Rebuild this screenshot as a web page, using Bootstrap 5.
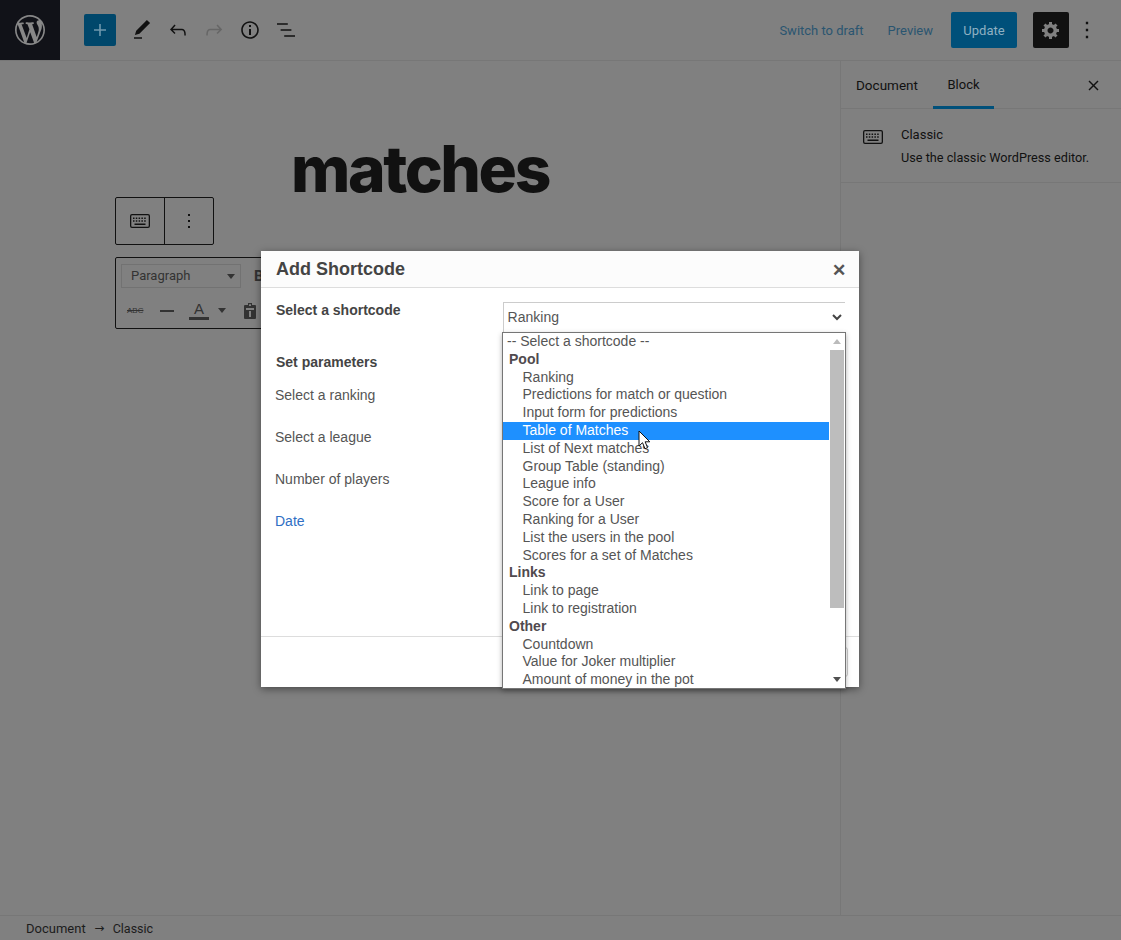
<!DOCTYPE html>
<html lang="en">
<head>
  <meta charset="UTF-8" />
  <meta name="viewport" content="width=device-width, initial-scale=1" />
  <title>Add Shortcode</title>
  <link href="https://cdn.jsdelivr.net/npm/bootstrap@5.3.0/dist/css/bootstrap.min.css" rel="stylesheet" />
  <style>
    html, body { height: 100%; margin: 0; overflow: hidden; }
    body { background: #808080; color: #111; font-family: Roboto, sans-serif; font-size: 13px; }
    .wp-shell { width: 1121px; height: 940px; position: relative; }
    svg { display: block; fill: currentColor; }

    /* top bar */
    .wp-top { height: 61px; border-bottom: 1px solid #777; }
    .wp-logo { width: 60px; height: 60px; background: #111218; color: #888; }
    .wp-tools { padding-left: 24px; gap: 4px; }
    .wp-add { width: 32px; height: 32px; background: #00476b; color: #6f98ad; border-radius: 2px; margin-right: 6px; }
    .wp-tool { width: 32px; height: 32px; color: #111; }
    .wp-tool-off { color: #666; }
    .wp-link { color: #2a5570; font-size: 13px; padding-top: 2px; }
    .wp-link-draft { margin-right: 24px; }
    .wp-link-preview { margin-right: 18px; }
    .wp-update { width: 66px; height: 36px; background: #00507a; color: #8fb0c2; border-radius: 2px; font-size: 13px; padding-top: 1px; }
    .wp-gear { width: 36px; height: 36px; background: #111; color: #808080; border-radius: 2px; }

    /* editor */
    .wp-main { height: 854px; }
    .wp-editor { width: 840px; }
    .wp-title { font-family: Inter, sans-serif; font-weight: 800; font-size: 64px; letter-spacing: -2.4px; line-height: 68px; margin: 74px 0 0; color: #111; }
    .wp-blockbar { width: 99px; height: 48px; margin: -6px 0 12px 115px; border: 1px solid #111; border-radius: 2px; }
    .wp-blockbar > div { width: 48px; }
    .wp-blockbar > div + div { border-left: 1px solid #111; width: 49px; }
    .wp-classic { width: 400px; height: 72px; margin-left: 115px; border: 1px solid #111; border-radius: 2px; color: #333; padding: 6px 5px; }
    .wp-format { width: 120px; height: 24px; border: 1px solid #727272; padding: 0 5px 0 9px; font-size: 13px; color: #333; }
    .wp-caret { width: 0; height: 0; border-left: 4px solid transparent; border-right: 4px solid transparent; border-top: 5px solid #333; }
    .wp-abc { font-size: 8px; font-family: "Liberation Sans", sans-serif; text-decoration: line-through; width: 24px; margin-left: 6px; }
    .wp-dash { width: 14px; height: 2px; background: #333; margin: 0 15px 0 9px; }
    .wp-color { font-family: "Liberation Sans", sans-serif; font-size: 15px; line-height: 16px; border-bottom: 3px solid #333; width: 20px; text-align: center; margin-right: 9px; }
    .wp-bold { font-size: 15px; margin-left: 13px; }

    /* sidebar */
    .wp-side { width: 281px; border-left: 1px solid #777; }
    .wp-tabs { height: 48px; border-bottom: 1px solid #777; padding-left: 15px; }
    .wp-tab-doc { width: 77px; line-height: 48px; font-size: 13.500px; }
    .wp-tab-on { width: 61px; line-height: 48px; height: 48px; text-align: center; border-bottom: 3px solid #00507a; }
    .wp-x { margin: 0 16px 0 auto; }
    .wp-card { height: 74px; border-bottom: 1px solid #777; padding: 17px 0 0 22px; gap: 18px; }
    .wp-card-name { line-height: 18px; margin-bottom: 4px; }
    .wp-card-desc { font-size: 12.700px; }

    /* footer */
    .wp-foot { height: 25px; border-top: 1px solid #777; padding-left: 26px; line-height: 25px; font-size: 13px; color: #1c1c1c; }
    .wp-foot-arrow { font-family: "DejaVu Sans", sans-serif; font-size: 12px; width: 27px; text-align: center; }
    .wp-foot-last { font-size: 12.500px; }

    /* shortcode modal */
    .sc-modal { position: absolute; left: 261px; top: 251px; width: 598px; height: 436px; background: #fff; box-shadow: 0 2px 8px rgba(0,0,0,.45); color: #555; font-family: "Liberation Sans", sans-serif; font-size: 14px; }
    .sc-head { height: 37px; background: #fcfcfc; border-bottom: 1px solid #ddd; padding: 2px 13px 0 15px; }
    .sc-head h1 { font-size: 18px; font-weight: 700; margin: 0; color: #444; }
    .sc-close { font-size: 17px; font-weight: 700; color: #555; line-height: 1; }
    .sc-body { height: 348px; padding: 14px 14px 0 14px; }
    .sc-left { width: 228px; }
    .sc-strong { font-weight: 700; color: #444; padding-left: 1px; line-height: 16px; }
    .sc-field { line-height: 16px; margin-bottom: 26px; }
    .sc-date { color: #2f6fc4; }
    .sc-select { width: 343px; height: 31px; border-top: 1px solid #ccc; border-left: 1px solid #ccc; padding: 0 3px 2px 4px; color: #555; }
    .sc-foot { border-top: 1px solid #ddd; height: 51px; padding-top: 10px; }
    .sc-btn { width: 60px; height: 30px; margin: 0 11px 0 auto; border: 1px solid #ccc; border-radius: 3px; }

    /* open select list */
    .sc-list { position: absolute; left: 241px; top: 81px; width: 344px; height: 357px; background: #fff; border: 1px solid #767676; box-shadow: 0 2px 5px rgba(0,0,0,.3); overflow: hidden; }
    .sc-list ul { margin: 0; padding: 0; list-style: none; width: 327px; }
    .sc-list li { height: 17.800px; line-height: 17.800px; padding-left: 19.500px; color: #555; white-space: nowrap; }
    .sc-list li.sc-none { padding-left: 4px; }
    .sc-list li.sc-group { padding-left: 6px; font-weight: 700; color: #504a4e; }
    .sc-list li.sc-on { background: #1e90ff; color: #fff; }
    .sc-scroll { position: absolute; right: 0; top: 0; width: 16px; height: 100%; background: #fff; }
    .sc-thumb { position: absolute; left: 1px; right: 1px; top: 17px; height: 258px; background: #bdbdbd; }
    .sc-arrow { position: absolute; left: 4px; width: 0; height: 0; border-left: 4px solid transparent; border-right: 4px solid transparent; }
    .sc-up { top: 6px; border-bottom: 5px solid #bbb; }
    .sc-down { bottom: 6px; border-top: 5px solid #505050; }
    .sc-cursor { position: absolute; left: 638px; top: 430px; }
  </style>
</head>
<body>
  <div class="wp-shell">
    <header class="wp-top d-flex align-items-center">
      <div class="wp-logo d-flex align-items-center justify-content-center">
        <svg width="30" height="30" viewBox="0 0 20 20"><path d="M20 10c0-5.51-4.49-10-10-10C4.48 0 0 4.49 0 10c0 5.52 4.48 10 10 10 5.51 0 10-4.48 10-10zM7.78 15.37L4.37 6.22c.55-.02 1.17-.08 1.17-.08.5-.06.44-1.13-.06-1.11 0 0-1.45.11-2.37.11-.18 0-.37 0-.58-.01C4.12 2.69 6.87 1.11 10 1.11c2.33 0 4.45.87 6.05 2.34-.68-.11-1.65.39-1.65 1.58 0 .74.45 1.36.9 2.1.35.61.55 1.36.55 2.46 0 1.49-1.4 5-1.4 5l-3.03-8.37c.54-.02.82-.17.82-.17.5-.05.44-1.25-.06-1.22 0 0-1.44.12-2.38.12-.87 0-2.33-.12-2.33-.12-.5-.03-.56 1.2-.06 1.22l.92.08 1.26 3.41zM17.41 10c.24-.64.74-1.87.43-4.25.7 1.29 1.05 2.71 1.05 4.25 0 3.29-1.73 6.24-4.4 7.78.97-2.59 1.94-5.2 2.92-7.78zM6.1 18.09C3.12 16.65 1.11 13.53 1.11 10c0-1.3.23-2.48.72-3.59C3.25 10.3 4.67 14.2 6.1 18.09zm4.03-6.63l2.58 6.98c-.86.29-1.76.45-2.71.45-.79 0-1.57-.11-2.29-.33.81-2.38 1.62-4.74 2.42-7.1z"/></svg>
      </div>
      <div class="wp-tools d-flex align-items-center">
        <div class="wp-add d-flex align-items-center justify-content-center">
          <svg width="24" height="24" viewBox="0 0 24 24"><path d="M18 11.2h-5.2V6h-1.6v5.2H6v1.6h5.2V18h1.6v-5.2H18z"/></svg>
        </div>
        <div class="wp-tool d-flex align-items-center justify-content-center">
          <svg width="24" height="24" viewBox="0 0 24 24"><path d="M20.1 5.1L16.9 2 6.2 12.7l-1.3 4.4 4.5-1.3L20.1 5.1zM4 20.8h8v-1.5H4v1.5z"/></svg>
        </div>
        <div class="wp-tool d-flex align-items-center justify-content-center">
          <svg width="24" height="24" viewBox="0 0 24 24"><path d="M18.3 11.7c-.6-.6-1.4-.9-2.3-.9H6.7l2.9-3.3-1.1-1-4.5 5L8.5 16l1-1-2.7-2.7H16c.5 0 .9.2 1.3.5 1 1 1 3.4 1 4.5v.3h1.5v-.2c0-1.5 0-4.3-1.5-5.7z"/></svg>
        </div>
        <div class="wp-tool wp-tool-off d-flex align-items-center justify-content-center">
          <svg width="24" height="24" viewBox="0 0 24 24"><path d="M15.6 6.5l-1.1 1 2.9 3.3H8c-.9 0-1.7.3-2.3.9-1.4 1.5-1.4 4.2-1.4 5.6v.2h1.5v-.3c0-1.1 0-3.5 1-4.5.3-.3.7-.5 1.3-.5h9.2L14.5 15l1.1 1.1 4.6-4.6-4.6-5z"/></svg>
        </div>
        <div class="wp-tool d-flex align-items-center justify-content-center">
          <svg width="24" height="24" viewBox="0 0 24 24"><path d="M12 3.2c-4.8 0-8.8 3.9-8.8 8.8 0 4.8 3.9 8.8 8.8 8.8 4.8 0 8.8-3.9 8.8-8.8 0-4.8-4-8.8-8.8-8.8zm0 16c-4 0-7.2-3.3-7.2-7.2C4.8 8 8 4.8 12 4.8s7.2 3.3 7.2 7.2c0 4-3.2 7.2-7.2 7.2zM11 17h2v-6h-2v6zm0-8h2V7h-2v2z"/></svg>
        </div>
        <div class="wp-tool d-flex align-items-center justify-content-center">
          <svg width="24" height="24" viewBox="0 0 24 24"><path d="M13.8 5.2H3v1.5h10.8V5.2zm-3.6 12v1.5H21v-1.5H10.2zm7.2-6H6.6v1.5h10.8v-1.5z"/></svg>
        </div>
      </div>
      <div class="ms-auto d-flex align-items-center">
        <span class="wp-link wp-link-draft">Switch to draft</span>
        <span class="wp-link wp-link-preview">Preview</span>
        <div class="wp-update d-flex align-items-center justify-content-center">Update</div>
        <div class="wp-gear d-flex align-items-center justify-content-center ms-3">
          <svg width="20" height="20" viewBox="0 0 20 20"><path d="M18 12h-2.180c-.17.7-.44 1.350-.81 1.930l1.540 1.540-2.100 2.100-1.540-1.540c-.58.36-1.230.63-1.910.79V19H8v-2.180c-.68-.16-1.330-.43-1.910-.79l-1.540 1.540-2.120-2.120 1.540-1.540c-.36-.58-.63-1.230-.79-1.910H1V9.030h2.170c.16-.7.44-1.350.8-1.940L2.430 5.550l2.100-2.100 1.540 1.540c.58-.37 1.240-.64 1.930-.81V2h3v2.180c.68.16 1.330.43 1.910.79l1.540-1.540 2.120 2.120-1.540 1.540c.36.59.64 1.240.8 1.940H18V12zm-8.500 1.500c1.660 0 3-1.340 3-3s-1.340-3-3-3-3 1.340-3 3 1.340 3 3 3z"/></svg>
        </div>
        <div class="d-flex ms-1" style="margin-right:20px">
          <svg width="28" height="28" viewBox="0 0 24 24"><path d="M13 19h-2v-2h2v2zm0-6h-2v-2h2v2zm0-6h-2V5h2v2z"/></svg>
        </div>
      </div>
    </header>

    <div class="wp-main d-flex">
      <main class="wp-editor">
        <h2 class="wp-title text-center">matches</h2>
        <div class="wp-blockbar d-flex">
          <div class="d-flex align-items-center justify-content-center">
            <svg width="20" height="14" viewBox="0 0 20 14"><path d="M2 0h16a2 2 0 0 1 2 2v10a2 2 0 0 1-2 2H2a2 2 0 0 1-2-2V2a2 2 0 0 1 2-2zm0 1.300a.7.7 0 0 0-.7.7v10a.7.7 0 0 0 .7.7h16a.7.7 0 0 0 .7-.7V2a.7.7 0 0 0-.7-.7zM3 3.500h1.500V5H3zm2.800 0h1.500V5H5.800zm2.800 0h1.500V5H8.600zm2.800 0h1.500V5h-1.500zm2.800 0h1.500V5h-1.500zM3 6.300h1.500v1.500H3zm2.800 0h1.500v1.500H5.800zm2.800 0h1.500v1.500H8.600zm2.800 0h1.500v1.500h-1.500zm2.800 0h1.500v1.500h-1.500zM4.500 9.500h11V11h-11z"/></svg>
          </div>
          <div class="d-flex align-items-center justify-content-center">
            <svg width="24" height="24" viewBox="0 0 24 24"><path d="M13 19h-2v-2h2v2zm0-6h-2v-2h2v2zm0-6h-2V5h2v2z"/></svg>
          </div>
        </div>
        <div class="wp-classic">
          <div class="d-flex align-items-center">
            <div class="wp-format d-flex align-items-center justify-content-between">Paragraph<span class="wp-caret"></span></div>
            <strong class="wp-bold">B</strong>
          </div>
          <div class="d-flex align-items-center" style="margin-top:13px">
            <span class="wp-abc">ABC</span>
            <span class="wp-dash"></span>
            <span class="wp-color">A</span>
            <span class="wp-caret me-3"></span>
            <svg width="16" height="16" viewBox="0 0 16 16"><path d="M6 0h4v2h3a1 1 0 0 1 1 1v12a1 1 0 0 1-1 1H3a1 1 0 0 1-1-1V3a1 1 0 0 1 1-1h3zm1 1.200V3h2V1.200zM4 5v2h8V5zm3 3v6h2V8z"/></svg>
          </div>
        </div>
      </main>
      <aside class="wp-side">
        <div class="wp-tabs d-flex align-items-start">
          <div class="wp-tab-doc">Document</div>
          <div class="wp-tab-on">Block</div>
          <div class="wp-x align-self-center">
            <svg width="24" height="24" viewBox="0 0 24 24"><path d="M12.500 11.500l4-4 1 1-4 4 4 4-1 1-4-4-4 4-1-1 4-4-4-4 1-1z"/></svg>
          </div>
        </div>
        <div class="wp-card d-flex">
          <svg class="mt-1" width="20" height="14" viewBox="0 0 20 14"><path d="M2 0h16a2 2 0 0 1 2 2v10a2 2 0 0 1-2 2H2a2 2 0 0 1-2-2V2a2 2 0 0 1 2-2zm0 1.300a.7.7 0 0 0-.7.7v10a.7.7 0 0 0 .7.7h16a.7.7 0 0 0 .7-.7V2a.7.7 0 0 0-.7-.7zM3 3.500h1.500V5H3zm2.800 0h1.500V5H5.800zm2.800 0h1.500V5H8.600zm2.800 0h1.500V5h-1.500zm2.800 0h1.500V5h-1.500zM3 6.300h1.500v1.500H3zm2.800 0h1.500v1.500H5.800zm2.800 0h1.500v1.500H8.600zm2.800 0h1.500v1.500h-1.500zm2.800 0h1.500v1.500h-1.500zM4.500 9.500h11V11h-11z"/></svg>
          <div>
            <div class="wp-card-name">Classic</div>
            <div class="wp-card-desc">Use the classic WordPress editor.</div>
          </div>
        </div>
      </aside>
    </div>

    <footer class="wp-foot d-flex">
      <span>Document</span>
      <span class="wp-foot-arrow">→</span>
      <span class="wp-foot-last">Classic</span>
    </footer>

    <div class="sc-modal">
      <div class="sc-head d-flex align-items-center justify-content-between">
        <h1>Add Shortcode</h1>
        <span class="sc-close">✕</span>
      </div>
      <div class="sc-body d-flex">
        <div class="sc-left">
          <div class="sc-strong" style="margin-bottom:36px">Select a shortcode</div>
          <div class="sc-strong" style="margin-bottom:17px">Set parameters</div>
          <div class="sc-field">Select a ranking</div>
          <div class="sc-field">Select a league</div>
          <div class="sc-field">Number of players</div>
          <div class="sc-field sc-date">Date</div>
        </div>
        <div class="sc-select d-flex align-items-center justify-content-between">
          Ranking
          <svg width="10" height="7" viewBox="0 0 10 7"><path d="M1 1l4 4 4-4" fill="none" stroke="#444" stroke-width="2"/></svg>
        </div>
      </div>
      <div class="sc-foot d-flex"><div class="sc-btn"></div></div>

      <div class="sc-list">
        <ul>
          <li class="sc-none">-- Select a shortcode --</li>
          <li class="sc-group">Pool</li>
          <li>Ranking</li>
          <li>Predictions for match or question</li>
          <li>Input form for predictions</li>
          <li class="sc-on">Table of Matches</li>
          <li>List of Next matches</li>
          <li>Group Table (standing)</li>
          <li>League info</li>
          <li>Score for a User</li>
          <li>Ranking for a User</li>
          <li>List the users in the pool</li>
          <li>Scores for a set of Matches</li>
          <li class="sc-group">Links</li>
          <li>Link to page</li>
          <li>Link to registration</li>
          <li class="sc-group">Other</li>
          <li>Countdown</li>
          <li>Value for Joker multiplier</li>
          <li>Amount of money in the pot</li>
        </ul>
        <div class="sc-scroll">
          <span class="sc-arrow sc-up"></span>
          <div class="sc-thumb"></div>
          <span class="sc-arrow sc-down"></span>
        </div>
      </div>
    </div>

    <svg class="sc-cursor" width="13" height="20" viewBox="0 0 13 20"><path d="M1 1v15l3.500-3.300 2.500 6 2.600-1.100-2.500-5.800h4.700z" fill="#fff" stroke="#111" stroke-width="1"/></svg>
  </div>

  <script src="https://cdn.jsdelivr.net/npm/bootstrap@5.3.0/dist/js/bootstrap.bundle.min.js"></script>
</body>
</html>
